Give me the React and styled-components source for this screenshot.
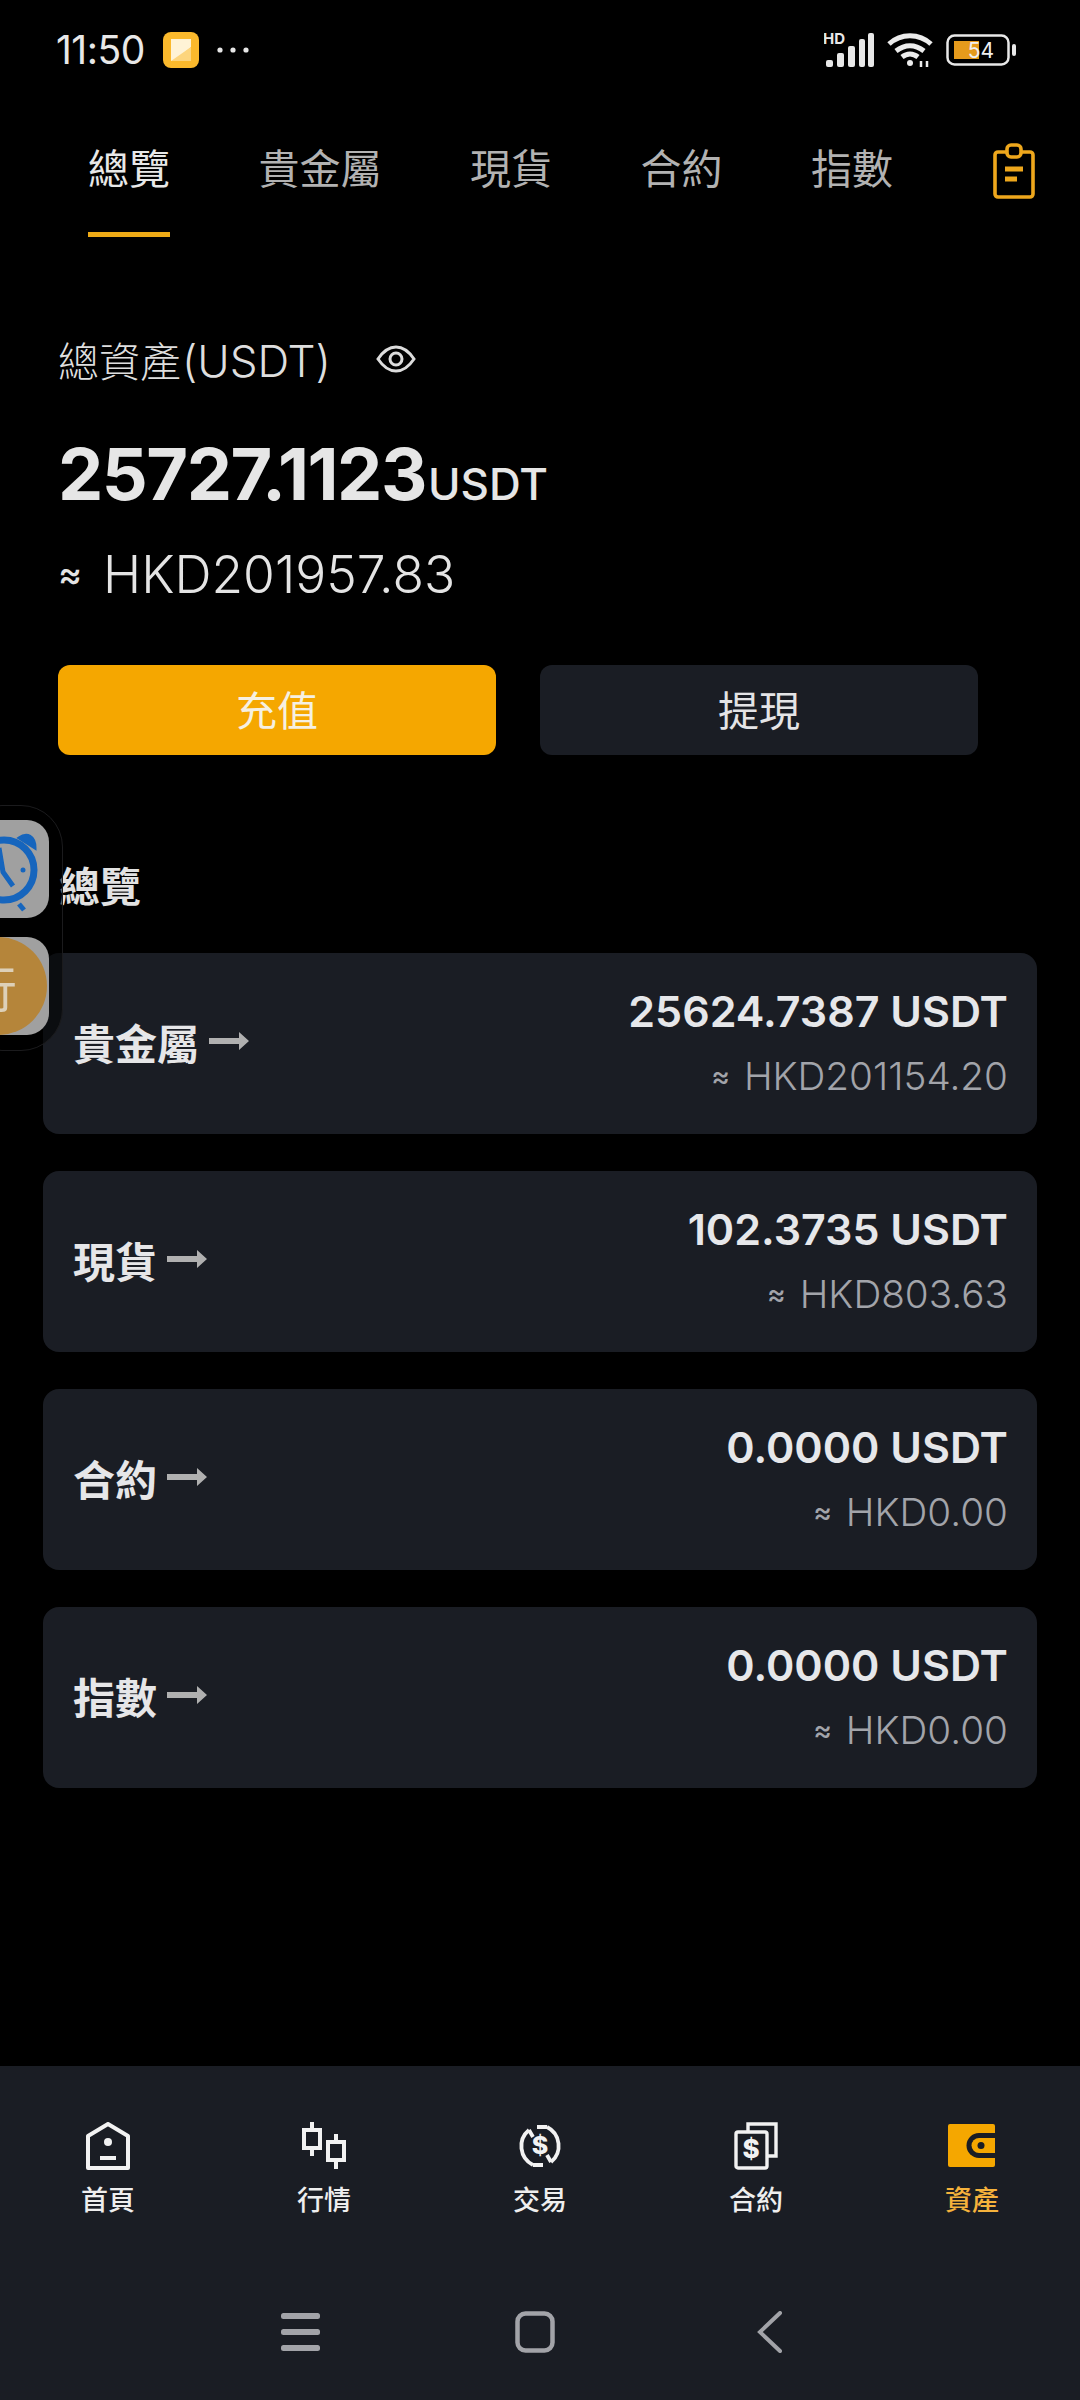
import React from "react";
import styled, { createGlobalStyle } from "styled-components";

const FONT = `Inter, "Noto Sans CJK TC", sans-serif`;
const CJK = `"Noto Sans CJK TC", sans-serif`;

const Global = createGlobalStyle`
  html, body { margin: 0; padding: 0; background: #000; }
  * { box-sizing: border-box; }
`;
const Page = styled.div`
  position: relative; width: 1080px; height: 2400px; background: #000; overflow: hidden;
  display: flex; flex-direction: column; font-family: ${FONT}; color: #e6e6e8;
`;
const StatusBar = styled.div`
  height: 100px; padding: 32px 64px 0 56px; display: flex; align-items: flex-start; justify-content: space-between;
`;
const StatusLeft = styled.div`display: flex; align-items: center; height: 36px; gap: 18px;`;
const StatusRight = styled.div`display: flex; align-items: center; height: 36px; gap: 13px;`;
const Time = styled.span`font-size: 39px; line-height: 36px; font-weight: 400; color: #e8e8e8; letter-spacing: -0.5px;`;
const Tabs = styled.nav`height: 137px; padding: 0 45px 0 88px; display: flex; gap: 88.5px; align-items: stretch;`;
const Tab = styled.div`
  padding-top: 34px; height: 137px; line-height: 64px; font-size: 41px; font-family: ${CJK}; font-weight: 400;
  color: ${p => (p.$on ? "#e8e8e8" : "#b2b2b2")}; border-bottom: 5px solid ${p => (p.$on ? "#eeaa16" : "transparent")};
`;
const TabIcon = styled.div`margin-left: auto; padding-top: 43px;`;
const Summary = styled.section`padding: 97px 58px 0 58px;`;
const LabelRow = styled.div`display: flex; align-items: center; height: 50px; gap: 45px;`;
const Label = styled.span`font-size: 41px; font-family: ${CJK}; font-weight: 300; color: #dedede;`;
const LabelLatin = styled.span`font-size: 44px; font-family: ${FONT}; font-weight: 300; margin-left: 1px;`;
const TotalRow = styled.div`margin-top: 50px; display: flex; align-items: baseline; height: 80px; line-height: 80px;`;
const TotalNum = styled.span`font-size: 72px; font-weight: 700; color: #e6e6e6; letter-spacing: -1.5px;`;
const TotalUnit = styled.span`font-size: 44px; font-weight: 500; color: #e6e6e6; margin-left: 2px;`;
const Approx = styled.div`margin-top: 30px; line-height: 60px; font-size: 51.5px; font-weight: 300; color: #e4e4e4; display: flex; align-items: center; gap: 21px;`;
const Wave = styled.span`font-size: 36px; font-weight: 500;`;
const Buttons = styled.div`margin-top: 61px; display: flex; gap: 44px;`;
const Btn = styled.button`
  width: 438px; height: 90px; border: 0; border-radius: 12px; font-family: ${CJK}; font-size: 41px; font-weight: 400; padding: 0 0 5px;
  color: ${p => (p.$primary ? "#f6f0e2" : "#e4e4e6")}; background: ${p => (p.$primary ? "#f5a700" : "#1a1d24")};
`;
const SectionTitle = styled.h2`margin: 99px 0 0 59px; font-size: 41px; line-height: 60px; font-weight: 700; font-family: ${CJK}; color: #e2e2e2; height: 99px;`;
const Cards = styled.div`display: flex; flex-direction: column; gap: 37px; padding: 0 43px;`;
const Card = styled.div`
  height: 181px; border-radius: 16px; background: #1a1d24; padding: 0 29px 0 30px; display: flex; align-items: center; justify-content: space-between;
`;
const CardLeft = styled.div`display: flex; align-items: center; gap: 10px; padding-bottom: 5px;`;
const CardName = styled.span`font-size: 42px; font-family: ${CJK}; font-weight: 700; color: #e6e6e8;`;
const CardRight = styled.div`display: flex; flex-direction: column; align-items: flex-end;`;
const Amount = styled.div`font-size: 43px; line-height: 65px; font-weight: 600; color: #e6e7ea;`;
const Sub = styled.div`font-size: 38.7px; line-height: 65px; font-weight: 300; color: #a2a4aa; display: flex; align-items: center; gap: 14px;`;
const SubWave = styled.span`font-size: 28px; font-weight: 500;`;
const Spacer = styled.div`flex: 1;`;
const BottomBar = styled.footer`height: 334px; background: #1a1d24; display: flex; flex-direction: column;`;
const NavGrid = styled.div`display: grid; grid-template-columns: repeat(5, 216px); padding-top: 55px;`;
const NavItem = styled.div`display: flex; flex-direction: column; align-items: center; color: ${p => (p.$on ? "#f5b23c" : "#eeeeee")};`;
const NavIcon = styled.div`height: 50px; width: 52px; display: flex; align-items: center; justify-content: center;`;
const NavLabel = styled.span`margin-top: 8px; font-size: 27px; line-height: 40px; font-family: ${CJK}; font-weight: 500;`;
const SysNav = styled.div`margin-top: 91px; padding-left: 281px; display: flex; align-items: center; height: 44px;`;
const Floating = styled.aside`
  position: absolute; left: -40px; top: 805px; width: 103px; height: 246px; border: 1.5px solid #1b1b1d; border-radius: 42px;
  background: rgba(0,0,0,.55); padding-top: 14px; display: flex; flex-direction: column; align-items: flex-end; padding-right: 13px; gap: 19px;
`;
const FloatTile = styled.div`
  position: relative; width: 90px; height: 98px; border-radius: 22px; background: #a0a0a0; overflow: hidden;
`;
const FloatCircle = styled.div`
  position: absolute; left: -10px; top: 0; width: 98px; height: 98px; border-radius: 50%; background: #b5853a; color: #ddd0b8;
  font: 400 50px/98px ${CJK}; text-align: center; white-space: nowrap; padding-right: 12px;
`;

const Clip = () => (
  <svg width="42" height="56" viewBox="0 0 42 56" fill="none" stroke="#eea71c" strokeWidth="3.6">
    <rect x="2" y="9" width="38" height="45" rx="3" />
    <rect x="14" y="2" width="14" height="12" rx="4" fill="#000" />
    <path d="M12 26h18M12 36h12" strokeWidth="5" />
  </svg>
);
const Eye = () => (
  <svg width="40" height="28" viewBox="0 0 40 28" fill="none" stroke="#dcdcdc" strokeWidth="3">
    <path d="M2 14C8 5 14 2 20 2s12 3 18 12c-6 9-12 12-18 12S8 23 2 14Z" />
    <circle cx="20" cy="14" r="6" />
  </svg>
);
const Arrow = () => (
  <svg width="40" height="22" viewBox="0 0 40 22"><path d="M0 8h30V2l10 9-10 9v-6H0z" fill="#b0b0b0" /></svg>
);
const AppIcon = () => (
  <svg width="36" height="36" viewBox="0 0 36 36">
    <rect width="36" height="36" rx="8" fill="#fbb92c" />
    <path d="M8 7h20v8L12 29H8z" fill="#fff3d6" />
    <path d="M8 29 28 15v14z" fill="#fdd57d" />
  </svg>
);
const Dots = () => (
  <svg width="32" height="6" viewBox="0 0 32 6" fill="#e6e6e6"><circle cx="3" cy="3" r="2.6" /><circle cx="16" cy="3" r="2.6" /><circle cx="29" cy="3" r="2.6" /></svg>
);
const Signal = () => (
  <svg width="50" height="36" viewBox="0 0 50 36" fill="#e8e8e8">
    <text x="-1" y="12" fontSize="15" fontWeight="700" fontFamily="Inter, sans-serif">HD</text>
    <rect x="2" y="28" width="7" height="7" rx="2" /><rect x="13" y="21" width="7" height="14" rx="2" />
    <rect x="24" y="14" width="7" height="21" rx="2" /><rect x="35" y="7" width="6" height="28" rx="2" /><rect x="44" y="1" width="6" height="34" rx="2" />
  </svg>
);
const Wifi = () => (
  <svg width="46" height="34" viewBox="0 0 46 34" fill="none" stroke="#ececec" strokeWidth="5">
    <path d="M2 11C14 0 32 0 44 11" /><path d="M9 18c9-7 19-7 28 0" /><path d="M15 24c5-4 11-4 16 0" />
    <circle cx="23" cy="30" r="3" fill="#ececec" stroke="none" />
    <path d="M34 34v-6M40 34v-6" strokeWidth="2.5" />
  </svg>
);
const Battery = () => (
  <svg width="70" height="32" viewBox="0 0 70 32">
    <rect x="1.5" y="1.5" width="61" height="29" rx="7" fill="none" stroke="#e8e8e8" strokeWidth="2.5" />
    <rect x="8" y="7" width="25" height="18" fill="#e59a1c" />
    <rect x="66" y="10" width="4" height="12" rx="2" fill="#e8e8e8" />
    <text x="35" y="24" fontSize="21" textAnchor="middle" fill="#f0f0f0" fontFamily="Inter, sans-serif">54</text>
  </svg>
);
const Home = () => (
  <svg width="44" height="48" viewBox="0 0 44 48" fill="none" stroke="#f2f2f2" strokeWidth="4">
    <path d="M2 14 22 2l20 12v32H2z" strokeLinejoin="round" />
    <circle cx="22" cy="20" r="4" fill="#f2f2f2" stroke="none" />
    <path d="M14 36h16" />
  </svg>
);
const Candle = () => (
  <svg width="44" height="48" viewBox="0 0 44 48" fill="none" stroke="#f2f2f2" strokeWidth="4">
    <path d="M10 0v8M10 26v8M34 12v8M34 38v9" />
    <rect x="2" y="8" width="16" height="18" /><rect x="26" y="20" width="16" height="18" />
  </svg>
);
const Swap = () => (
  <svg width="46" height="48" viewBox="0 0 46 48" fill="none" stroke="#f2f2f2" strokeWidth="3.8">
    <path d="M12 8A21 21 0 0 0 16 43" /><path d="M34 40A21 21 0 0 0 30 5" />
    <path d="M30 5 H20M16 43h10" />
    <path d="M12 8l4 7M34 40l-4-7" />
    <text x="23" y="32" fontSize="25" fontWeight="800" textAnchor="middle" fill="#f2f2f2" stroke="none" fontFamily="Inter, sans-serif">$</text>
  </svg>
);
const Contract = () => (
  <svg width="44" height="48" viewBox="0 0 44 48" fill="none" stroke="#f2f2f2" strokeWidth="3.4">
    <path d="M14 9V2h28v32h-8" />
    <rect x="2" y="10" width="31" height="36" rx="2" />
    <text x="17" y="36" fontSize="26" fontWeight="800" textAnchor="middle" fill="#f2f2f2" stroke="none" fontFamily="Inter, sans-serif">$</text>
  </svg>
);
const Wallet = () => (
  <svg width="48" height="44" viewBox="0 0 48 44">
    <rect width="47" height="43" rx="2" fill="#f5a700" />
    <path d="M47 9H31a12.500 12.500 0 0 0 0 25h16" fill="#1a1d24" />
    <path d="M47 14H31a7.500 7.500 0 0 0 0 15h16z" fill="#f5a700" />
    <circle cx="33" cy="21.500" r="3.500" fill="#1a1d24" />
  </svg>
);
const MenuGlyph = () => (
  <svg width="40" height="38" viewBox="0 0 40 38" fill="#a2a3a8"><rect y="0" width="39" height="6" rx="2.500" /><rect y="16" width="39" height="6" rx="2.500" /><rect y="32" width="39" height="6" rx="2.500" /></svg>
);
const SquareGlyph = () => (
  <svg width="40" height="42" viewBox="0 0 40 42" fill="none" stroke="#a2a3a8" strokeWidth="4.500"><rect x="2.500" y="2.500" width="35" height="37" rx="8" /></svg>
);
const BackGlyph = () => (
  <svg width="26" height="42" viewBox="0 0 26 42" fill="none" stroke="#a2a3a8" strokeWidth="4" strokeLinecap="round"><path d="M23 2 3 21l20 19" /></svg>
);
const SysSlot = styled.div`width: ${p => p.$w}px; display: flex;`;
const ClockSvg = styled.svg`position: absolute; left: 0; top: 0;`;
const ClockArt = () => (
  <ClockSvg width="90" height="98" viewBox="0 0 90 98" fill="none" stroke="#1665bd" strokeWidth="7">
    <circle cx="45" cy="50" r="30" />
    <path d="M60 18c8-6 16-2 16 10z" fill="#1665bd" strokeWidth="3" />
    <path d="M40 28l4 24 10 14" strokeWidth="5" />
    <path d="M60 84l5 6" strokeWidth="5" />
    <circle cx="64" cy="50" r="2.500" fill="#1665bd" stroke="none" />
  </ClockSvg>
);

const rows = [
  ["貴金屬", "25624.7387 USDT", "HKD201154.20"],
  ["現貨", "102.3735 USDT", "HKD803.63"],
  ["合約", "0.0000 USDT", "HKD0.00"],
  ["指數", "0.0000 USDT", "HKD0.00"],
];
const navs = [["首頁", <Home />], ["行情", <Candle />], ["交易", <Swap />], ["合約", <Contract />], ["資產", <Wallet />]];

export default function App() {
  return (
    <Page>
      <Global />
      <StatusBar>
        <StatusLeft><Time>11:50</Time><AppIcon /><Dots /></StatusLeft>
        <StatusRight><Signal /><Wifi /><Battery /></StatusRight>
      </StatusBar>
      <Tabs>
        <Tab $on>總覽</Tab><Tab>貴金屬</Tab><Tab>現貨</Tab><Tab>合約</Tab><Tab>指數</Tab>
        <TabIcon><Clip /></TabIcon>
      </Tabs>
      <Summary>
        <LabelRow><Label>總資產<LabelLatin>(USDT)</LabelLatin></Label><Eye /></LabelRow>
        <TotalRow><TotalNum>25727.1123</TotalNum><TotalUnit>USDT</TotalUnit></TotalRow>
        <Approx><Wave>≈</Wave>HKD201957.83</Approx>
        <Buttons><Btn $primary>充值</Btn><Btn>提現</Btn></Buttons>
      </Summary>
      <SectionTitle>總覽</SectionTitle>
      <Cards>
        {rows.map(([n, a, s]) => (
          <Card key={n}>
            <CardLeft><CardName>{n}</CardName><Arrow /></CardLeft>
            <CardRight><Amount>{a}</Amount><Sub><SubWave>≈</SubWave>{s}</Sub></CardRight>
          </Card>
        ))}
      </Cards>
      <Spacer />
      <BottomBar>
        <NavGrid>
          {navs.map(([l, i], k) => (
            <NavItem key={l} $on={k === 4}><NavIcon>{i}</NavIcon><NavLabel>{l}</NavLabel></NavItem>
          ))}
        </NavGrid>
        <SysNav>
          <SysSlot $w={234}><MenuGlyph /></SysSlot>
          <SysSlot $w={242}><SquareGlyph /></SysSlot>
          <SysSlot $w={30}><BackGlyph /></SysSlot>
        </SysNav>
      </BottomBar>
      <Floating>
        <FloatTile><ClockArt /></FloatTile>
        <FloatTile><FloatCircle>行</FloatCircle></FloatTile>
      </Floating>
    </Page>
  );
}
